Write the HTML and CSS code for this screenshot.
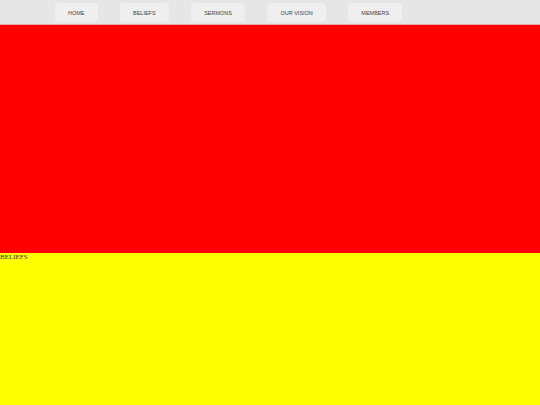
FILE: index.html
```html
<!DOCTYPE html>
<html>
  <head>
    <title>Church</title>
    <link rel="stylesheet" href="styles.css">
    <meta name="viewport" content="width=device-width, initial-scale=1">
    <meta charset="utf-8">
  </head>
  <body>
    <div id="nav-bar">
      <a class="nav-btn" href="#home">HOME</a>
      <a class="nav-btn" href="#beliefs">BELIEFS</a>
      <a class="nav-btn" href="#sermons">SERMONS</a>
      <a class="nav-btn" href="#vision">OUR VISION</a>
      <a class="nav-btn" href="#members">MEMBERS</a>
    </div>
    <div id="home" class="section section-home"></div>
    <div id="beliefs" class="section section-beliefs">BELIEFS</div>
  </body>
</html>
```

FILE: styles.css
```css
body {
  margin: 0;
  font-family: 'Liberation Serif', 'Times New Roman', serif;
}
#nav-bar {
  display: flex;
  align-items: center;
  gap: 22.5px;
  height: 24px;
  padding-left: 55px;
  background-color: #e6e6e6;
  border-bottom: 1px solid #eaa8a8;
}
.nav-btn {
  display: flex;
  align-items: center;
  height: 19px;
  padding: 0 13px;
  margin-top: 1px;
  border-radius: 4px;
  background-color: #efefef;
  color: #444;
  font-family: 'Liberation Sans', Arial, sans-serif;
  font-size: 5.5px;
  text-decoration: none;
}
.section {
  font-size: 7px;
  color: #333;
}
.section-home {
  height: 228px;
  background-color: #ff0000;
}
.section-beliefs {
  height: 400px;
  background-color: #ffff00;
  line-height: 9px;
}
```
